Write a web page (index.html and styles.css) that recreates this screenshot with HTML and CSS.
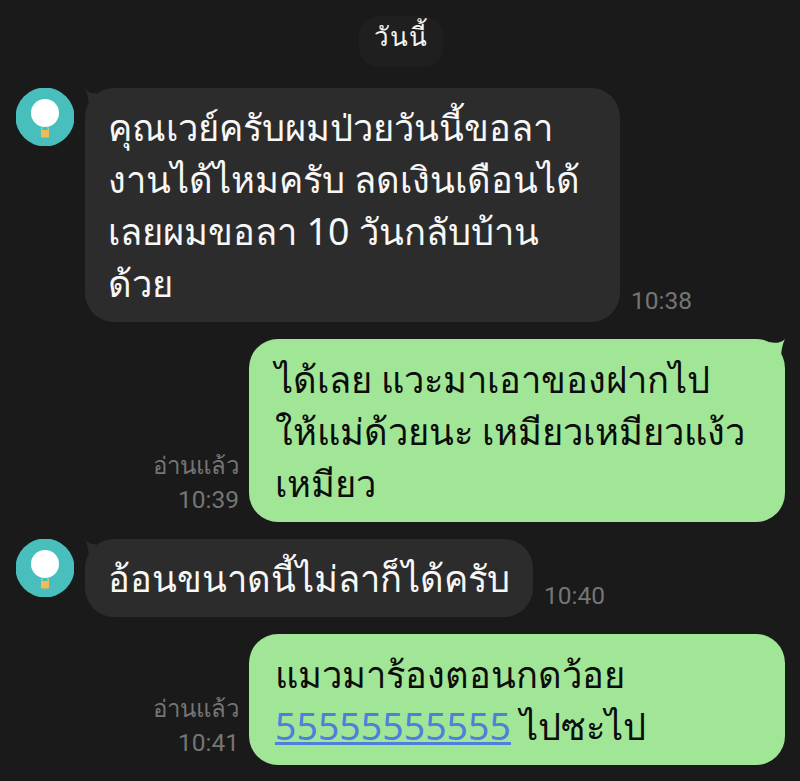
FILE: index.html
```html
<!DOCTYPE html>
<html lang="th">
<head>
<meta charset="utf-8">
<title>แชท</title>
<link rel="stylesheet" href="styles.css">
</head>
<body>
<main class="chat">
  <div class="date"><span class="date-pill">วันนี้</span></div>

  <div class="row in">
    <svg class="avatar" viewBox="0 0 58 58" aria-hidden="true"><circle cx="29" cy="29" r="29.5" fill="#48bfbc"/><circle cx="29" cy="25" r="14" fill="#fff"/><path d="M26.500 38l-1 4M31.500 38l1 4" stroke="#e8d9a8" stroke-width=".8"/><rect x="25" y="42" width="8" height="7.500" rx=".8" fill="#eebd55"/></svg>
    <svg class="tail tail-in" viewBox="0 0 12 20" aria-hidden="true"><path d="M0 0C2 3 6 6 11 5L12 20H4C4 11 2 4 0 0Z"/></svg>
    <div class="bubble bubble-in wide">คุณเวย์ครับผมป่วยวันนี้ขอลา<br>งานได้ไหมครับ ลดเงินเดือนได้<br>เลยผมขอลา <span class="num">10</span> วันกลับบ้าน<br>ด้วย</div>
    <div class="meta meta-in">10:38</div>
  </div>

  <div class="row out">
    <div class="meta meta-out"><span class="read">อ่านแล้ว</span><span>10:39</span></div>
    <div class="bubble bubble-out">ได้เลย แวะมาเอาของฝากไป<br>ให้แม่ด้วยนะ เหมียวเหมียวแง้ว<br>เหมียว</div>
    <svg class="tail tail-out" viewBox="0 0 16 20" aria-hidden="true"><path d="M16 0C14 2.500 9 5 0 3L1 20H12C12 11 14 4 16 0Z"/></svg>
  </div>

  <div class="row in">
    <svg class="avatar" viewBox="0 0 58 58" aria-hidden="true"><circle cx="29" cy="29" r="29.5" fill="#48bfbc"/><circle cx="29" cy="25" r="14" fill="#fff"/><path d="M26.500 38l-1 4M31.500 38l1 4" stroke="#e8d9a8" stroke-width=".8"/><rect x="25" y="42" width="8" height="7.500" rx=".8" fill="#eebd55"/></svg>
    <svg class="tail tail-in" viewBox="0 0 12 20" aria-hidden="true"><path d="M0 0C2 3 6 6 11 5L12 20H4C4 11 2 4 0 0Z"/></svg>
    <div class="bubble bubble-in">อ้อนขนาดนี้ไม่ลาก็ได้ครับ</div>
    <div class="meta meta-in">10:40</div>
  </div>

  <div class="row out">
    <div class="meta meta-out"><span class="read">อ่านแล้ว</span><span>10:41</span></div>
    <div class="bubble bubble-out">แมวมาร้องตอนกดว้อย<br><a class="link num" href="#">55555555555</a> ไปซะไป</div>
  </div>
</main>
</body>
</html>
```
FILE: styles.css
```css
html, body {
  margin: 0;
  height: 100%;
  background: #1a1a1a;
  overflow: hidden;
}
.chat {
  display: flex;
  flex-direction: column;
  gap: 17px;
  padding: 16px 15px 0 16px;
  font-family: "Noto Sans", "DejaVu Sans", sans-serif;
}
.date {
  display: flex;
  justify-content: center;
  margin-bottom: 4px;
}
.date-pill {
  display: block;
  width: 84px;
  height: 51px;
  line-height: 41px;
  text-align: center;
  border-radius: 20px;
  background: #1f1f1f;
  color: #f4f4f4;
  font-size: 26px;
  letter-spacing: 1px;
}
.row {
  display: flex;
  align-items: flex-end;
}
.in { justify-content: flex-start; }
.out { justify-content: flex-end; }
.avatar {
  width: 58px;
  height: 58px;
  margin-right: 11px;
  align-self: flex-start;
  flex: none;
}
.tail {
  width: 12px;
  height: 20px;
  align-self: flex-start;
  flex: none;
  position: relative;
}
.tail-in { fill: #2c2c2c; margin-right: -12px; }
.tail-out { fill: #a0e696; width: 16px; margin-left: -16px; }
.bubble {
  font-size: 36.300px;
  line-height: 52px;
  white-space: nowrap;
  box-sizing: border-box;
}
.num {
  font-size: 37.500px;
  line-height: 0;
}
.bubble-in {
  background: #2c2c2c;
  color: #f7f7f7;
  border-radius: 29px;
  padding: 13px 23px 13px 23px;
}
.wide { width: 535px; }
.bubble-out {
  background: #a0e696;
  color: #0c0c0c;
  width: 536px;
  border-radius: 29px;
  padding: 14px 26px 13px 26px;
}
.link {
  color: #4f7fdc;
  text-decoration: underline;
}
.meta {
  display: flex;
  flex-direction: column;
  color: #757575;
  font-size: 24.500px;
  line-height: 33px;
  font-family: "Roboto", "Noto Sans", sans-serif;
}
.read { font-size: 24px; }
.meta-in { margin-left: 11px; margin-bottom: 5px; }
.meta-out { align-items: flex-end; margin-right: 10px; margin-bottom: 6px; }
```
